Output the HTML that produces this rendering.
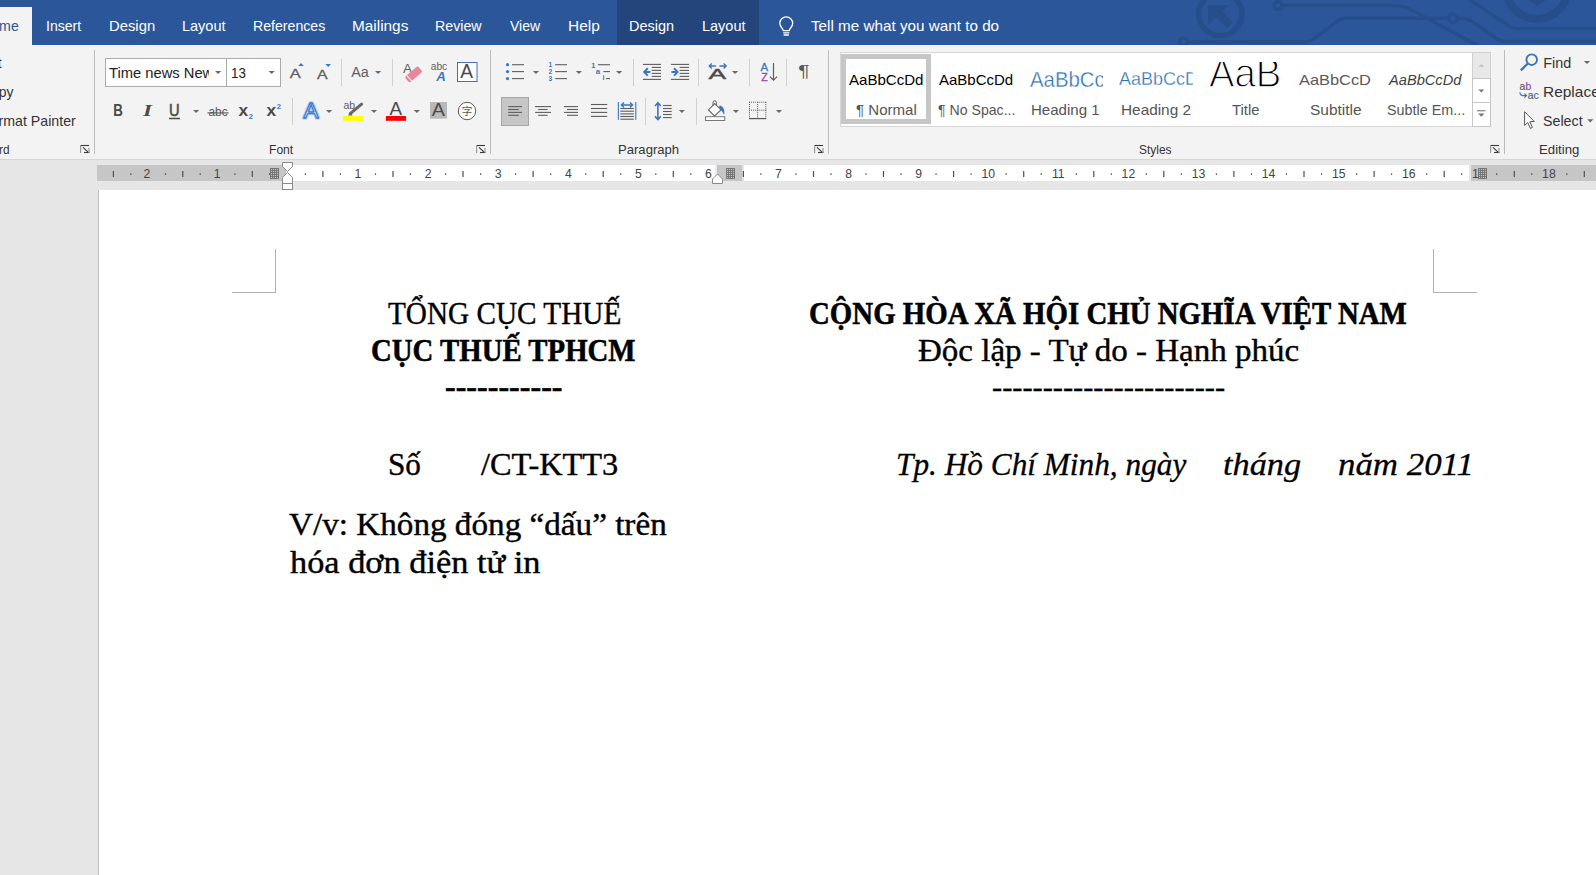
<!DOCTYPE html><html lang="vi"><head><meta charset="utf-8"><title>Document - Word</title><style>
html,body{margin:0;padding:0}
body{width:1596px;height:875px;overflow:hidden;position:relative;background:#e6e6e6;font-family:"Liberation Sans",sans-serif}
div,svg{position:absolute;box-sizing:border-box}
.t{margin:0;padding:0}
.vs{width:1px;background:#d0d0d0}
</style></head><body>
<div style="left:0;top:0;width:1596px;height:45px;background:#2b579a"></div>
<svg width="1596" height="45" viewBox="0 0 1596 45" style="left:0;top:0"><g fill="none" stroke="#264e8b" stroke-width="3.4"><circle cx="1220.4" cy="14" r="21.6" stroke-width="5.6"/><circle cx="1278" cy="5.6" r="4"/><path d="M1282.5 5.6 H1398 Q1404 5.6 1410 9 L1474 43.5 L1480 47"/><circle cx="1183.5" cy="42" r="4"/><path d="M1188 42 H1306 Q1310 42 1314 39 L1336 22 Q1341 18.2 1346 18.2 H1448"/><circle cx="1452.7" cy="18.2" r="4.2"/><path d="M1457 18.2 H1462 Q1468 18.2 1473 22 L1497 39 Q1501 41.5 1506 41.5 H1600"/><path d="M1466 -3 L1508 25.5 Q1512 28.5 1518 28.5 H1600"/><circle cx="1537" cy="-12" r="31" stroke-width="8"/></g><path d="M1522 -4 L1537 6 L1552 -4z" fill="#264e8b"/><path d="M1208 5 h21 l-7 6 l11 11 l-6 6 l-11 -11 l-8 8z" fill="#264e8b"/><path d="M783.2 30.6 C783.2 28.4 779.8 27.2 779.8 23.3 a6.45 6.45 0 0 1 12.9 0 C792.7 27.2 789.3 28.4 789.3 30.6 Z M783.2 32.8 H789.3 M783.6 35 H788.9" fill="none" stroke="#fff" stroke-width="1.3" stroke-linejoin="round"/></svg>
<div style="left:617px;top:0;width:142px;height:45px;background:#23457c"></div>
<div style="left:0;top:7px;width:32px;height:38px;background:#f3f3f3"></div>
<div style="left:0;top:45px;width:1596px;height:114px;background:#f3f3f3"></div>
<div style="left:0;top:159px;width:1596px;height:1px;background:#d6d6d6"></div>
<div class="vs" style="left:94px;top:50px;height:104px;background:#bdbdbd"></div>
<div class="vs" style="left:490px;top:50px;height:104px;background:#bdbdbd"></div>
<div class="vs" style="left:828px;top:50px;height:104px;background:#bdbdbd"></div>
<div class="vs" style="left:1504px;top:50px;height:104px;background:#bdbdbd"></div>
<div class="vs" style="left:341px;top:59px;height:27px"></div>
<div class="vs" style="left:392px;top:59px;height:27px"></div>
<div class="vs" style="left:633px;top:59px;height:27px"></div>
<div class="vs" style="left:698px;top:59px;height:27px"></div>
<div class="vs" style="left:749px;top:59px;height:27px"></div>
<div class="vs" style="left:786px;top:59px;height:27px"></div>
<div class="vs" style="left:292px;top:98px;height:27px"></div>
<div class="vs" style="left:645px;top:98px;height:27px"></div>
<div class="vs" style="left:696px;top:98px;height:27px"></div>
<div style="left:105px;top:58px;width:122px;height:29px;background:#fff;border:1px solid #ababab;overflow:hidden"></div>
<div style="left:226px;top:58px;width:55px;height:29px;background:#fff;border:1px solid #ababab"></div>
<div style="left:840px;top:52px;width:651px;height:75px;background:#fff;border:1px solid #d6d6d6"></div>
<div style="left:841px;top:54px;width:90px;height:70px;background:#fff;border:5px solid #c6c6c6"></div>
<div style="left:1472px;top:52px;width:19px;height:27px;background:#e8e8e8;border:1px solid #d0d0d0"></div>
<div style="left:1472px;top:78px;width:19px;height:25px;background:#fff;border:1px solid #c6c6c6"></div>
<div style="left:1472px;top:102px;width:19px;height:25px;background:#fff;border:1px solid #c6c6c6"></div>
<div style="left:501px;top:97px;width:28px;height:29px;background:#c6c6c6;border:1px solid #a6a6a6"></div>
<svg width="1596" height="115" viewBox="0 45 1596 115" style="left:0;top:45px" font-family="Liberation Sans, sans-serif"><path d="M215 71 h6.2 l-3.1 3.1 z" fill="#6a6a6a"/><path d="M268.6 71 h6.2 l-3.1 3.1 z" fill="#6a6a6a"/><path d="M375 71 h6.2 l-3.1 3.1 z" fill="#6a6a6a"/><path d="M193 110 h6.2 l-3.1 3.1 z" fill="#6a6a6a"/><path d="M326 110 h6.2 l-3.1 3.1 z" fill="#6a6a6a"/><path d="M370.9 110 h6.2 l-3.1 3.1 z" fill="#6a6a6a"/><path d="M413.8 110 h6.2 l-3.1 3.1 z" fill="#6a6a6a"/><path d="M532.9 71 h6.2 l-3.1 3.1 z" fill="#6a6a6a"/><path d="M575.8 71 h6.2 l-3.1 3.1 z" fill="#6a6a6a"/><path d="M616 71 h6.2 l-3.1 3.1 z" fill="#6a6a6a"/><path d="M732 71 h6.2 l-3.1 3.1 z" fill="#6a6a6a"/><path d="M678.8 110 h6.2 l-3.1 3.1 z" fill="#6a6a6a"/><path d="M732.8 110 h6.2 l-3.1 3.1 z" fill="#6a6a6a"/><path d="M775.9 110 h6.2 l-3.1 3.1 z" fill="#6a6a6a"/><path d="M1583.9 61 h6.2 l-3.1 3.1 z" fill="#6a6a6a"/><path d="M1587.2 119.3 h6.2 l-3.1 3.1 z" fill="#6a6a6a"/><path d="M80.5 145.5 H89" fill="none" stroke="#3a3a3a" stroke-width="1.1"/><path d="M80.6 146 V153" fill="none" stroke="#9a9a9a" stroke-width="1.2"/><path d="M83 147.3 L88.6 152.6" stroke="#3a3a3a" stroke-width="1.1" fill="none"/><path d="M84 152.5 H89.5" stroke="#3a3a3a" stroke-width="1.1" fill="none"/><path d="M89 148 V153" stroke="#9a9a9a" stroke-width="1.2" fill="none"/><path d="M476.5 145.5 H485" fill="none" stroke="#3a3a3a" stroke-width="1.1"/><path d="M476.6 146 V153" fill="none" stroke="#9a9a9a" stroke-width="1.2"/><path d="M479 147.3 L484.6 152.6" stroke="#3a3a3a" stroke-width="1.1" fill="none"/><path d="M480 152.5 H485.5" stroke="#3a3a3a" stroke-width="1.1" fill="none"/><path d="M485 148 V153" stroke="#9a9a9a" stroke-width="1.2" fill="none"/><path d="M814.5 145.5 H823" fill="none" stroke="#3a3a3a" stroke-width="1.1"/><path d="M814.6 146 V153" fill="none" stroke="#9a9a9a" stroke-width="1.2"/><path d="M817 147.3 L822.6 152.6" stroke="#3a3a3a" stroke-width="1.1" fill="none"/><path d="M818 152.5 H823.5" stroke="#3a3a3a" stroke-width="1.1" fill="none"/><path d="M823 148 V153" stroke="#9a9a9a" stroke-width="1.2" fill="none"/><path d="M1490.5 145.5 H1499" fill="none" stroke="#3a3a3a" stroke-width="1.1"/><path d="M1490.6 146 V153" fill="none" stroke="#9a9a9a" stroke-width="1.2"/><path d="M1493 147.3 L1498.6 152.6" stroke="#3a3a3a" stroke-width="1.1" fill="none"/><path d="M1494 152.5 H1499.5" stroke="#3a3a3a" stroke-width="1.1" fill="none"/><path d="M1499 148 V153" stroke="#9a9a9a" stroke-width="1.2" fill="none"/><text x="289.8" y="77.8" font-size="12.8" fill="#5e5e5e" stroke="#5e5e5e" stroke-width="0.3" textLength="11" lengthAdjust="spacingAndGlyphs">A</text><path d="M298.2 66 h5.6 l-2.8 -3.1z" fill="#3b76c2"/><text x="317" y="78.6" font-size="12.2" fill="#5e5e5e" stroke="#5e5e5e" stroke-width="0.3" textLength="10.6" lengthAdjust="spacingAndGlyphs">A</text><path d="M325.4 64 h5.6 l-2.8 2.9z" fill="#3b76c2"/><text x="351.2" y="76.6" font-size="14" fill="#5e5e5e" textLength="17.6" lengthAdjust="spacingAndGlyphs">Aa</text><text x="403" y="73" font-size="13.4" fill="#5e5e5e">A</text><g transform="translate(413.6 74.4) rotate(-41)"><rect x="-8.6" y="-3.8" width="17.2" height="7.6" rx="1.6" fill="#e5889b"/><rect x="-6.3" y="-3.8" width="1" height="7.6" fill="#f3f3f3"/></g><text x="430.8" y="70" font-size="10.6" fill="#5e5e5e" textLength="16.4" lengthAdjust="spacingAndGlyphs">abc</text><text x="436.2" y="80.7" font-size="13.2" font-weight="bold" font-style="italic" fill="#3b76c2">A</text><rect x="457.5" y="62.5" width="19.5" height="19" fill="#fff" stroke="#3f6fb5" stroke-width="1"/><text x="460.2" y="77.6" font-size="19.4" fill="#4a4a4a" textLength="12.8" lengthAdjust="spacingAndGlyphs">A</text><text x="113.2" y="116.4" font-size="15.6" font-weight="bold" fill="#4a4a4a" textLength="9.6" lengthAdjust="spacingAndGlyphs">B</text><text x="143" y="116.4" font-size="16.6" font-weight="bold" font-style="italic" fill="#4a4a4a" font-family="Liberation Serif, serif" textLength="9" lengthAdjust="spacingAndGlyphs">I</text><text x="169" y="116.4" font-size="15.6" fill="#4a4a4a" stroke="#4a4a4a" stroke-width="0.5" textLength="10.6" lengthAdjust="spacingAndGlyphs">U</text><rect x="169" y="117.75" width="11.00" height="1.5" fill="#4a4a4a"/><text x="208.4" y="116.4" font-size="13.6" fill="#5a5a5a" textLength="19.2" lengthAdjust="spacingAndGlyphs">abc</text><rect x="207.4" y="112.35" width="21.20" height="1.1" fill="#5a5a5a"/><text x="238.6" y="116.4" font-size="16" font-weight="bold" fill="#4a4a4a" textLength="9.6" lengthAdjust="spacingAndGlyphs">x</text><text x="248.7" y="118.8" font-size="7.6" font-weight="bold" fill="#3b76c2">2</text><text x="266.4" y="116.4" font-size="16" font-weight="bold" fill="#4a4a4a" textLength="9.6" lengthAdjust="spacingAndGlyphs">x</text><text x="276.8" y="109" font-size="7.6" font-weight="bold" fill="#3b76c2">2</text><text x="303.6" y="118.4" font-size="22.4" fill="#fff" stroke="#bcd4f0" stroke-width="3.4" stroke-linejoin="round" textLength="15" lengthAdjust="spacingAndGlyphs">A</text><text x="303.6" y="118.4" font-size="22.4" fill="#fff" stroke="#3b7bd0" stroke-width="1.3" stroke-linejoin="round" textLength="15" lengthAdjust="spacingAndGlyphs">A</text><text x="343.4" y="108.6" font-size="11" fill="#5e5e5e" textLength="11.6" lengthAdjust="spacingAndGlyphs">ab</text><path d="M361.6 104.2 L350.2 113.6" stroke="#666" stroke-width="3" stroke-linecap="round" fill="none"/><path d="M351.4 112 l-3.6 3.6 h4.6z" fill="#666"/><rect x="343" y="116" width="20" height="4.8" fill="#ffff00"/><text x="389.6" y="114.5" font-size="17.6" fill="#4a4a4a" textLength="12.6" lengthAdjust="spacingAndGlyphs">A</text><rect x="385.9" y="116" width="20.1" height="4.8" fill="#ff0000"/><rect x="430" y="102" width="17" height="16.7" fill="#b9b9b9"/><text x="431.8" y="116.4" font-size="18.4" fill="#4a4a4a" textLength="13.2" lengthAdjust="spacingAndGlyphs">A</text><circle cx="467" cy="111" r="8.7" fill="#fff" stroke="#5a5a5a" stroke-width="1"/><text x="467" y="115" font-size="10.6" fill="#5a5a5a" text-anchor="middle" font-family="Noto Sans CJK SC, Noto Sans CJK JP, sans-serif">字</text><circle cx="507.5" cy="64.7" r="1.6" fill="#3b76c2"/><rect x="512" y="64.15" width="12.00" height="1.1" fill="#5e5e5e"/><rect x="555.2" y="64.15" width="11.80" height="1.1" fill="#5e5e5e"/><circle cx="507.5" cy="71.6" r="1.6" fill="#3b76c2"/><rect x="512" y="71.05" width="12.00" height="1.1" fill="#5e5e5e"/><rect x="555.2" y="71.05" width="11.80" height="1.1" fill="#5e5e5e"/><circle cx="507.5" cy="78.6" r="1.6" fill="#3b76c2"/><rect x="512" y="78.05" width="12.00" height="1.1" fill="#5e5e5e"/><rect x="555.2" y="78.05" width="11.80" height="1.1" fill="#5e5e5e"/><text x="548.6" y="67.0" font-size="6.6" font-weight="bold" fill="#3b76c2">1</text><text x="548.6" y="73.89999999999999" font-size="6.6" font-weight="bold" fill="#3b76c2">2</text><text x="548.6" y="80.89999999999999" font-size="6.6" font-weight="bold" fill="#3b76c2">3</text><text x="591.2" y="67.6" font-size="7.4" font-weight="bold" fill="#3b76c2">1</text><rect x="598" y="64.15" width="12.00" height="1.1" fill="#5e5e5e"/><text x="595.8" y="74" font-size="7.8" font-weight="bold" fill="#3b76c2">a</text><rect x="603.4" y="71.05" width="6.60" height="1.1" fill="#5e5e5e"/><text x="602.4" y="80.4" font-size="7.2" font-weight="bold" fill="#3b76c2">i</text><rect x="606" y="78.05" width="4.00" height="1.1" fill="#5e5e5e"/><rect x="642.9" y="63.85" width="18.10" height="1.1" fill="#5e5e5e"/><rect x="642.9" y="78.85" width="18.10" height="1.1" fill="#5e5e5e"/><rect x="651.7" y="66.85" width="9.30" height="1.1" fill="#5e5e5e"/><rect x="651.7" y="69.85" width="9.30" height="1.1" fill="#5e5e5e"/><rect x="651.7" y="72.85" width="9.30" height="1.1" fill="#5e5e5e"/><rect x="651.7" y="75.85" width="9.30" height="1.1" fill="#5e5e5e"/><rect x="671" y="63.85" width="18.10" height="1.1" fill="#5e5e5e"/><rect x="671" y="78.85" width="18.10" height="1.1" fill="#5e5e5e"/><rect x="679.6" y="66.85" width="9.50" height="1.1" fill="#5e5e5e"/><rect x="679.6" y="69.85" width="9.50" height="1.1" fill="#5e5e5e"/><rect x="679.6" y="72.85" width="9.50" height="1.1" fill="#5e5e5e"/><rect x="679.6" y="75.85" width="9.50" height="1.1" fill="#5e5e5e"/><path d="M650.4 71.9 H644.6 M647.8 68.2 L644.2 71.9 L647.8 75.6" stroke="#3b76c2" stroke-width="2" fill="none"/><path d="M671.4 71.9 H677.2 M674 68.2 L677.6 71.9 L674 75.6" stroke="#3b76c2" stroke-width="2" fill="none"/><text x="708.6" y="78.8" font-size="14" fill="#4a4a4a" stroke="#4a4a4a" stroke-width="0.4" textLength="17.6" lengthAdjust="spacingAndGlyphs">A</text><path d="M716 66 H709.4 M711.8 63.6 L709.2 66 L711.8 68.4 M719.4 66 H726 M723.6 63.6 L726.2 66 L723.6 68.4" stroke="#3b76c2" stroke-width="1.3" fill="none"/><text x="760.6" y="71.3" font-size="11.4" fill="#3b76c2" stroke="#3b76c2" stroke-width="0.3">A</text><text x="761.2" y="80.7" font-size="10.6" fill="#8e4bb0" stroke="#8e4bb0" stroke-width="0.3">Z</text><path d="M773.5 63 V80 M770 76.6 L773.5 80.2 L777 76.6" stroke="#5e5e5e" stroke-width="1.2" fill="none"/><text x="798.2" y="77.4" font-size="15.6" fill="#5a5a5a" textLength="11.4" lengthAdjust="spacingAndGlyphs">¶</text><rect x="508.2" y="106.05" width="13.80" height="1.1" fill="#5e5e5e"/><rect x="535.1" y="106.05" width="15.90" height="1.1" fill="#5e5e5e"/><rect x="563.9" y="106.05" width="14.10" height="1.1" fill="#5e5e5e"/><rect x="508.2" y="108.95" width="10.60" height="1.1" fill="#5e5e5e"/><rect x="538.2" y="108.95" width="9.40" height="1.1" fill="#5e5e5e"/><rect x="567" y="108.95" width="11.00" height="1.1" fill="#5e5e5e"/><rect x="508.2" y="111.85" width="13.80" height="1.1" fill="#5e5e5e"/><rect x="535.1" y="111.85" width="15.90" height="1.1" fill="#5e5e5e"/><rect x="563.9" y="111.85" width="14.10" height="1.1" fill="#5e5e5e"/><rect x="508.2" y="114.75" width="10.60" height="1.1" fill="#5e5e5e"/><rect x="538.2" y="114.75" width="9.40" height="1.1" fill="#5e5e5e"/><rect x="567" y="114.75" width="11.00" height="1.1" fill="#5e5e5e"/><rect x="590.9" y="103.95" width="16.30" height="1.1" fill="#5e5e5e"/><rect x="590.9" y="107.95" width="16.30" height="1.1" fill="#5e5e5e"/><rect x="590.9" y="111.85" width="16.30" height="1.1" fill="#5e5e5e"/><rect x="590.9" y="115.85" width="16.30" height="1.1" fill="#5e5e5e"/><rect x="617.8" y="102" width="1.1" height="17.8" fill="#3b76c2"/><rect x="635.2" y="102" width="1.1" height="17.8" fill="#3b76c2"/><path d="M621.6 105 H632.4 M624 102.6 L621.4 105 L624 107.4 M630 102.6 L632.6 105 L630 107.4" stroke="#3b76c2" stroke-width="1.4" fill="none"/><rect x="620.3" y="107.95" width="13.60" height="1.1" fill="#5e5e5e"/><rect x="620.3" y="110.65" width="13.60" height="1.1" fill="#5e5e5e"/><rect x="620.3" y="113.35" width="13.60" height="1.1" fill="#5e5e5e"/><rect x="620.3" y="115.95" width="13.60" height="1.1" fill="#5e5e5e"/><rect x="620.3" y="118.65" width="13.60" height="1.1" fill="#5e5e5e"/><path d="M657.9 103 V119.4 M655 106 L657.9 102.8 L660.8 106 M655 116.4 L657.9 119.6 L660.8 116.4" stroke="#3b76c2" stroke-width="1.6" fill="none"/><rect x="663" y="104.95" width="8.70" height="1.1" fill="#5e5e5e"/><rect x="663" y="107.95" width="8.70" height="1.1" fill="#5e5e5e"/><rect x="663" y="110.95" width="8.70" height="1.1" fill="#5e5e5e"/><rect x="663" y="113.95" width="8.70" height="1.1" fill="#5e5e5e"/><rect x="663" y="117.05" width="8.70" height="1.1" fill="#5e5e5e"/><rect x="705.5" y="116.7" width="19.2" height="3.8" fill="#fff" stroke="#777" stroke-width="1"/><path d="M714.8 103.6 L721 109.9 L714.6 116 L708.4 109.9 Z" fill="#fff" stroke="#666" stroke-width="1.1"/><path d="M713 106 V102.4 a1.7 1.7 0 0 1 3.4 0 V105.4" fill="none" stroke="#666" stroke-width="1"/><path d="M719.4 105.6 C723.4 106 725 110 724.2 115 C722.6 112 721.4 110.4 719 108.6z" fill="#3b76c2"/><path d="M749.5 102 V118.4" stroke="#555" stroke-width="1" stroke-dasharray="1 1.05" fill="none"/><path d="M757.6 102 V118.4" stroke="#555" stroke-width="1" stroke-dasharray="1 1.05" fill="none"/><path d="M765.8 102 V118.4" stroke="#555" stroke-width="1" stroke-dasharray="1 1.05" fill="none"/><path d="M749 102.2 H766.3" stroke="#555" stroke-width="1" stroke-dasharray="1 1.05" fill="none"/><path d="M749 110.2 H766.3" stroke="#555" stroke-width="1" stroke-dasharray="1 1.05" fill="none"/><rect x="749" y="118.00" width="17.30" height="1.2" fill="#555"/><path d="M1478.3 67 h6 l-3 -3z" fill="#c4c4c4"/><path d="M1478.3 89.6 h6 l-3 3z" fill="#777"/><rect x="1477.1" y="110.2" width="8.4" height="1.1" fill="#777"/><path d="M1478.1 113.6 h6.4 l-3.2 3.2z" fill="#777"/><circle cx="1531.7" cy="59.7" r="5.3" fill="none" stroke="#3a72b5" stroke-width="1.9"/><path d="M1527.6 63.8 L1520.8 70.4" stroke="#3a72b5" stroke-width="2.2" fill="none"/><text x="1519.6" y="90.4" font-size="10.4" fill="#5e5e5e" stroke="#5e5e5e" stroke-width="0.2">a</text><text x="1525.6" y="90.4" font-size="10.4" fill="#8e4bb0" stroke="#8e4bb0" stroke-width="0.2">b</text><text x="1527.8" y="99.3" font-size="10.4" fill="#5e5e5e" stroke="#5e5e5e" stroke-width="0.2">a</text><text x="1533.4" y="99.3" font-size="10.4" fill="#3a72b5" stroke="#3a72b5" stroke-width="0.2">c</text><path d="M1519.8 92.4 q0.4 3.2 3.4 3.2 h3 M1524.4 93.6 l2.2 2 l-2.2 2" stroke="#3a72b5" stroke-width="1.1" fill="none"/><path d="M1524.6 111.8 V125.4 L1527.8 122.6 L1530.4 128.4 L1532.4 127.4 L1529.8 121.8 L1534.2 121.4 Z" fill="#fff" stroke="#555" stroke-width="1" stroke-linejoin="round"/></svg>
<div style="left:98px;top:190px;width:1498px;height:685px;background:#fff;border-left:1px solid #c2c2c2"></div>
<svg width="1596" height="40" viewBox="0 155 1596 40" style="left:0;top:155px" font-family="Liberation Sans, sans-serif" font-size="12.2" fill="#444"><rect x="97" y="165" width="189.3" height="16" fill="#c6c6c6"/><rect x="286.3" y="165" width="429" height="16" fill="#fff"/><rect x="717" y="165" width="25.2" height="16" fill="#c6c6c6"/><rect x="744" y="165" width="725" height="16" fill="#fff"/><rect x="1471" y="165" width="125" height="16" fill="#c6c6c6"/><rect x="112.8" y="171" width="1.2" height="6" fill="#505050"/><rect x="130.2" y="173.3" width="1.2" height="1.6" fill="#505050"/><rect x="164.9" y="173.3" width="1.2" height="1.6" fill="#505050"/><rect x="182.2" y="171" width="1.2" height="6" fill="#505050"/><rect x="199.6" y="173.3" width="1.2" height="1.6" fill="#505050"/><rect x="234.3" y="173.3" width="1.2" height="1.6" fill="#505050"/><rect x="251.7" y="171" width="1.2" height="6" fill="#505050"/><rect x="269.0" y="173.3" width="1.2" height="1.6" fill="#505050"/><rect x="304.8" y="173.3" width="1.2" height="1.6" fill="#505050"/><rect x="322.3" y="171" width="1.2" height="6" fill="#505050"/><rect x="339.8" y="173.3" width="1.2" height="1.6" fill="#505050"/><rect x="374.9" y="173.3" width="1.2" height="1.6" fill="#505050"/><rect x="392.4" y="171" width="1.2" height="6" fill="#505050"/><rect x="409.9" y="173.3" width="1.2" height="1.6" fill="#505050"/><rect x="444.9" y="173.3" width="1.2" height="1.6" fill="#505050"/><rect x="462.4" y="171" width="1.2" height="6" fill="#505050"/><rect x="480.0" y="173.3" width="1.2" height="1.6" fill="#505050"/><rect x="515.0" y="173.3" width="1.2" height="1.6" fill="#505050"/><rect x="532.5" y="171" width="1.2" height="6" fill="#505050"/><rect x="550.1" y="173.3" width="1.2" height="1.6" fill="#505050"/><rect x="585.1" y="173.3" width="1.2" height="1.6" fill="#505050"/><rect x="602.6" y="171" width="1.2" height="6" fill="#505050"/><rect x="620.1" y="173.3" width="1.2" height="1.6" fill="#505050"/><rect x="655.2" y="173.3" width="1.2" height="1.6" fill="#505050"/><rect x="672.7" y="171" width="1.2" height="6" fill="#505050"/><rect x="690.2" y="173.3" width="1.2" height="1.6" fill="#505050"/><rect x="742.8" y="171" width="1.2" height="6" fill="#505050"/><rect x="760.3" y="173.3" width="1.2" height="1.6" fill="#505050"/><rect x="795.3" y="173.3" width="1.2" height="1.6" fill="#505050"/><rect x="812.9" y="171" width="1.2" height="6" fill="#505050"/><rect x="830.4" y="173.3" width="1.2" height="1.6" fill="#505050"/><rect x="865.4" y="173.3" width="1.2" height="1.6" fill="#505050"/><rect x="882.9" y="171" width="1.2" height="6" fill="#505050"/><rect x="900.4" y="173.3" width="1.2" height="1.6" fill="#505050"/><rect x="935.5" y="173.3" width="1.2" height="1.6" fill="#505050"/><rect x="953.0" y="171" width="1.2" height="6" fill="#505050"/><rect x="970.5" y="173.3" width="1.2" height="1.6" fill="#505050"/><rect x="1005.6" y="173.3" width="1.2" height="1.6" fill="#505050"/><rect x="1023.1" y="171" width="1.2" height="6" fill="#505050"/><rect x="1040.6" y="173.3" width="1.2" height="1.6" fill="#505050"/><rect x="1075.7" y="173.3" width="1.2" height="1.6" fill="#505050"/><rect x="1093.2" y="171" width="1.2" height="6" fill="#505050"/><rect x="1110.7" y="173.3" width="1.2" height="1.6" fill="#505050"/><rect x="1145.7" y="173.3" width="1.2" height="1.6" fill="#505050"/><rect x="1163.2" y="171" width="1.2" height="6" fill="#505050"/><rect x="1180.8" y="173.3" width="1.2" height="1.6" fill="#505050"/><rect x="1215.8" y="173.3" width="1.2" height="1.6" fill="#505050"/><rect x="1233.3" y="171" width="1.2" height="6" fill="#505050"/><rect x="1250.9" y="173.3" width="1.2" height="1.6" fill="#505050"/><rect x="1285.9" y="173.3" width="1.2" height="1.6" fill="#505050"/><rect x="1303.4" y="171" width="1.2" height="6" fill="#505050"/><rect x="1320.9" y="173.3" width="1.2" height="1.6" fill="#505050"/><rect x="1356.0" y="173.3" width="1.2" height="1.6" fill="#505050"/><rect x="1373.5" y="171" width="1.2" height="6" fill="#505050"/><rect x="1391.0" y="173.3" width="1.2" height="1.6" fill="#505050"/><rect x="1426.1" y="173.3" width="1.2" height="1.6" fill="#505050"/><rect x="1443.6" y="171" width="1.2" height="6" fill="#505050"/><rect x="1461.1" y="173.3" width="1.2" height="1.6" fill="#505050"/><rect x="1496.1" y="173.3" width="1.2" height="1.6" fill="#505050"/><rect x="1513.7" y="171" width="1.2" height="6" fill="#505050"/><rect x="1531.2" y="173.3" width="1.2" height="1.6" fill="#505050"/><rect x="1566.2" y="173.3" width="1.2" height="1.6" fill="#505050"/><rect x="1583.7" y="171" width="1.2" height="6" fill="#505050"/><text x="147.0" y="177.9" text-anchor="middle">2</text><text x="217.2" y="177.9" text-anchor="middle">1</text><text x="358.0" y="177.9" text-anchor="middle">1</text><text x="428.1" y="177.9" text-anchor="middle">2</text><text x="498.2" y="177.9" text-anchor="middle">3</text><text x="568.3" y="177.9" text-anchor="middle">4</text><text x="638.4" y="177.9" text-anchor="middle">5</text><text x="708.4" y="177.9" text-anchor="middle">6</text><text x="778.5" y="177.9" text-anchor="middle">7</text><text x="848.6" y="177.9" text-anchor="middle">8</text><text x="918.7" y="177.9" text-anchor="middle">9</text><text x="988.2" y="177.9" text-anchor="middle">10</text><text x="1058.3" y="177.9" text-anchor="middle">11</text><text x="1128.4" y="177.9" text-anchor="middle">12</text><text x="1198.5" y="177.9" text-anchor="middle">13</text><text x="1268.6" y="177.9" text-anchor="middle">14</text><text x="1338.7" y="177.9" text-anchor="middle">15</text><text x="1408.7" y="177.9" text-anchor="middle">16</text><text x="1548.9" y="177.9" text-anchor="middle">18</text><text x="1472" y="177.9">1</text><rect x="270" y="168" width="1" height="11" fill="#757575"/><rect x="272" y="168" width="1" height="11" fill="#757575"/><rect x="274" y="168" width="1" height="11" fill="#757575"/><rect x="276" y="168" width="1" height="11" fill="#757575"/><rect x="278" y="168" width="1" height="11" fill="#757575"/><rect x="270" y="168" width="9" height="1" fill="#757575"/><rect x="270" y="170" width="9" height="1" fill="#757575"/><rect x="270" y="172" width="9" height="1" fill="#757575"/><rect x="270" y="174" width="9" height="1" fill="#757575"/><rect x="270" y="176" width="9" height="1" fill="#757575"/><rect x="270" y="178" width="9" height="1" fill="#757575"/><rect x="726" y="168" width="1" height="11" fill="#757575"/><rect x="728" y="168" width="1" height="11" fill="#757575"/><rect x="730" y="168" width="1" height="11" fill="#757575"/><rect x="732" y="168" width="1" height="11" fill="#757575"/><rect x="734" y="168" width="1" height="11" fill="#757575"/><rect x="726" y="168" width="9" height="1" fill="#757575"/><rect x="726" y="170" width="9" height="1" fill="#757575"/><rect x="726" y="172" width="9" height="1" fill="#757575"/><rect x="726" y="174" width="9" height="1" fill="#757575"/><rect x="726" y="176" width="9" height="1" fill="#757575"/><rect x="726" y="178" width="9" height="1" fill="#757575"/><rect x="1478" y="168" width="1" height="11" fill="#757575"/><rect x="1480" y="168" width="1" height="11" fill="#757575"/><rect x="1482" y="168" width="1" height="11" fill="#757575"/><rect x="1484" y="168" width="1" height="11" fill="#757575"/><rect x="1486" y="168" width="1" height="11" fill="#757575"/><rect x="1478" y="168" width="9" height="1" fill="#757575"/><rect x="1478" y="170" width="9" height="1" fill="#757575"/><rect x="1478" y="172" width="9" height="1" fill="#757575"/><rect x="1478" y="174" width="9" height="1" fill="#757575"/><rect x="1478" y="176" width="9" height="1" fill="#757575"/><rect x="1478" y="178" width="9" height="1" fill="#757575"/><path d="M282.5 162.5 H292.5 V166.5 L287.5 171.5 L282.5 166.5 Z" fill="#fff" stroke="#8a8a8a" stroke-width="1"/><path d="M287.5 172.5 L292.5 177.5 V183.5 H282.5 V177.5 Z" fill="#fff" stroke="#8a8a8a" stroke-width="1"/><rect x="282.5" y="183.5" width="10" height="6" fill="#fff" stroke="#8a8a8a" stroke-width="1"/><path d="M717.5 174 L722.5 179 V183.5 H712.5 V179 Z" fill="#fff" stroke="#8a8a8a" stroke-width="1"/></svg>
<div style="left:275px;top:249px;width:1px;height:44px;background:#b0b0b0"></div><div style="left:232px;top:292px;width:44px;height:1px;background:#b0b0b0"></div>
<div style="left:1433px;top:249px;width:1px;height:44px;background:#b0b0b0"></div><div style="left:1433px;top:292px;width:44px;height:1px;background:#b0b0b0"></div>
<div class="t" style="position:absolute;left:-18.86px;top:-4.00px;height:60px;line-height:60px;white-space:pre;color:#2b579a;font-family:'Liberation Sans', sans-serif;font-size:14.6px;transform-origin:0 0;transform:scaleX(0.9700);">Home</div>
<div class="t" style="position:absolute;left:45.64px;top:-4.00px;height:60px;line-height:60px;white-space:pre;color:#fff;font-family:'Liberation Sans', sans-serif;font-size:14.6px;transform-origin:0 0;transform:scaleX(0.9639);">Insert</div>
<div class="t" style="position:absolute;left:108.58px;top:-4.00px;height:60px;line-height:60px;white-space:pre;color:#fff;font-family:'Liberation Sans', sans-serif;font-size:14.6px;transform-origin:0 0;transform:scaleX(1.0159);">Design</div>
<div class="t" style="position:absolute;left:181.61px;top:-4.00px;height:60px;line-height:60px;white-space:pre;color:#fff;font-family:'Liberation Sans', sans-serif;font-size:14.6px;transform-origin:0 0;transform:scaleX(0.9930);">Layout</div>
<div class="t" style="position:absolute;left:252.63px;top:-4.00px;height:60px;line-height:60px;white-space:pre;color:#fff;font-family:'Liberation Sans', sans-serif;font-size:14.6px;transform-origin:0 0;transform:scaleX(0.9685);">References</div>
<div class="t" style="position:absolute;left:351.55px;top:-4.00px;height:60px;line-height:60px;white-space:pre;color:#fff;font-family:'Liberation Sans', sans-serif;font-size:14.6px;transform-origin:0 0;transform:scaleX(1.0519);">Mailings</div>
<div class="t" style="position:absolute;left:434.63px;top:-4.00px;height:60px;line-height:60px;white-space:pre;color:#fff;font-family:'Liberation Sans', sans-serif;font-size:14.6px;transform-origin:0 0;transform:scaleX(0.9723);">Review</div>
<div class="t" style="position:absolute;left:509.60px;top:-4.00px;height:60px;line-height:60px;white-space:pre;color:#fff;font-family:'Liberation Sans', sans-serif;font-size:14.6px;transform-origin:0 0;transform:scaleX(0.9594);">View</div>
<div class="t" style="position:absolute;left:567.54px;top:-4.00px;height:60px;line-height:60px;white-space:pre;color:#fff;font-family:'Liberation Sans', sans-serif;font-size:14.6px;transform-origin:0 0;transform:scaleX(1.0586);">Help</div>
<div class="t" style="position:absolute;left:628.61px;top:-4.00px;height:60px;line-height:60px;white-space:pre;color:#fff;font-family:'Liberation Sans', sans-serif;font-size:14.6px;transform-origin:0 0;transform:scaleX(0.9932);">Design</div>
<div class="t" style="position:absolute;left:701.61px;top:-4.00px;height:60px;line-height:60px;white-space:pre;color:#fff;font-family:'Liberation Sans', sans-serif;font-size:14.6px;transform-origin:0 0;transform:scaleX(0.9930);">Layout</div>
<div class="t" style="position:absolute;left:811.00px;top:-4.00px;height:60px;line-height:60px;white-space:pre;color:#fff;font-family:'Liberation Sans', sans-serif;font-size:14.6px;transform-origin:0 0;transform:scaleX(1.0444);">Tell me what you want to do</div>
<div class="t" style="position:absolute;left:-20.51px;top:33.00px;height:60px;line-height:60px;white-space:pre;color:#333;font-family:'Liberation Sans', sans-serif;font-size:14.4px;transform-origin:0 0;transform:scaleX(0.9700);">Cut</div>
<div class="t" style="position:absolute;left:-18.98px;top:62.00px;height:60px;line-height:60px;white-space:pre;color:#333;font-family:'Liberation Sans', sans-serif;font-size:14.4px;transform-origin:0 0;transform:scaleX(0.9700);">Copy</div>
<div class="t" style="position:absolute;left:-17.78px;top:91.00px;height:60px;line-height:60px;white-space:pre;color:#333;font-family:'Liberation Sans', sans-serif;font-size:14.4px;transform-origin:0 0;transform:scaleX(0.9850);">Format Painter</div>
<div class="t" style="position:absolute;left:-41.14px;top:120.00px;height:60px;line-height:60px;white-space:pre;color:#333;font-family:'Liberation Sans', sans-serif;font-size:12.2px;transform-origin:0 0;transform:scaleX(0.9700);">Clipboard</div>
<div class="t" style="position:absolute;left:269.01px;top:120.00px;height:60px;line-height:60px;white-space:pre;color:#333;font-family:'Liberation Sans', sans-serif;font-size:12.2px;transform-origin:0 0;transform:scaleX(0.9917);">Font</div>
<div class="t" style="position:absolute;left:617.53px;top:120.00px;height:60px;line-height:60px;white-space:pre;color:#333;font-family:'Liberation Sans', sans-serif;font-size:12.2px;transform-origin:0 0;transform:scaleX(1.0732);">Paragraph</div>
<div class="t" style="position:absolute;left:1138.62px;top:120.00px;height:60px;line-height:60px;white-space:pre;color:#333;font-family:'Liberation Sans', sans-serif;font-size:12.2px;transform-origin:0 0;transform:scaleX(0.9813);">Styles</div>
<div class="t" style="position:absolute;left:1538.52px;top:120.00px;height:60px;line-height:60px;white-space:pre;color:#333;font-family:'Liberation Sans', sans-serif;font-size:12.2px;transform-origin:0 0;transform:scaleX(1.0833);">Editing</div>
<div class="t" style="position:absolute;left:230.71px;top:43.00px;height:60px;line-height:60px;white-space:pre;color:#222;font-family:'Liberation Sans', sans-serif;font-size:15.0px;transform-origin:0 0;transform:scaleX(0.8933);">13</div>
<div class="t" style="position:absolute;left:1543.20px;top:33.00px;height:60px;line-height:60px;white-space:pre;color:#333;font-family:'Liberation Sans', sans-serif;font-size:14.4px;transform-origin:0 0;transform:scaleX(1.0000);">Find</div>
<div class="t" style="position:absolute;left:1543.13px;top:62.00px;height:60px;line-height:60px;white-space:pre;color:#333;font-family:'Liberation Sans', sans-serif;font-size:14.4px;transform-origin:0 0;transform:scaleX(1.0745);">Replace</div>
<div class="t" style="position:absolute;left:1543.21px;top:91.00px;height:60px;line-height:60px;white-space:pre;color:#333;font-family:'Liberation Sans', sans-serif;font-size:14.4px;transform-origin:0 0;transform:scaleX(0.9897);">Select</div>
<div class="t" style="position:absolute;left:849.10px;top:50.00px;height:60px;line-height:60px;white-space:pre;color:#000;font-family:'Liberation Sans', sans-serif;font-size:14.8px;transform-origin:0 0;transform:scaleX(1.0178);">AaBbCcDd</div>
<div class="t" style="position:absolute;left:855.60px;top:80.00px;height:60px;line-height:60px;white-space:pre;color:#555;font-family:'Liberation Sans', sans-serif;font-size:14.6px;transform-origin:0 0;transform:scaleX(1.0310);">¶ Normal</div>
<div class="t" style="position:absolute;left:939.00px;top:50.00px;height:60px;line-height:60px;white-space:pre;color:#000;font-family:'Liberation Sans', sans-serif;font-size:14.8px;transform-origin:0 0;transform:scaleX(1.0137);">AaBbCcDd</div>
<div class="t" style="position:absolute;left:938.00px;top:80.00px;height:60px;line-height:60px;white-space:pre;color:#555;font-family:'Liberation Sans', sans-serif;font-size:14.6px;transform-origin:0 0;transform:scaleX(0.9671);">¶ No Spac...</div>
<div class="t" style="position:absolute;left:1030.97px;top:80.00px;height:60px;line-height:60px;white-space:pre;color:#555;font-family:'Liberation Sans', sans-serif;font-size:14.6px;transform-origin:0 0;transform:scaleX(1.0308);">Heading 1</div>
<div class="t" style="position:absolute;left:1120.55px;top:80.00px;height:60px;line-height:60px;white-space:pre;color:#555;font-family:'Liberation Sans', sans-serif;font-size:14.6px;transform-origin:0 0;transform:scaleX(1.0523);">Heading 2</div>
<div class="t" style="position:absolute;left:1232.20px;top:80.00px;height:60px;line-height:60px;white-space:pre;color:#555;font-family:'Liberation Sans', sans-serif;font-size:14.6px;transform-origin:0 0;transform:scaleX(1.0185);">Title</div>
<div class="t" style="position:absolute;left:1309.84px;top:80.00px;height:60px;line-height:60px;white-space:pre;color:#555;font-family:'Liberation Sans', sans-serif;font-size:14.6px;transform-origin:0 0;transform:scaleX(1.0617);">Subtitle</div>
<div class="t" style="position:absolute;left:1386.92px;top:80.00px;height:60px;line-height:60px;white-space:pre;color:#555;font-family:'Liberation Sans', sans-serif;font-size:14.6px;transform-origin:0 0;transform:scaleX(0.9833);">Subtle Em...</div>
<div class="t" style="position:absolute;left:1299.40px;top:50.00px;height:60px;line-height:60px;white-space:pre;color:#5a5a5a;font-family:'Liberation Sans', sans-serif;font-size:15px;transform-origin:0 0;transform:scaleX(1.0923);">AaBbCcD</div>
<div class="t" style="position:absolute;left:1389.19px;top:50.00px;height:60px;line-height:60px;white-space:pre;color:#404040;font-family:'Liberation Sans', sans-serif;font-size:14.8px;font-style:italic;transform-origin:0 0;transform:scaleX(0.9880);">AaBbCcDd</div>
<div style="left:106px;top:59px;width:103.30px;height:27.00px;overflow:hidden"><div class="t" style="position:absolute;left:2.80px;top:-16.00px;height:60px;line-height:60px;white-space:pre;color:#222;font-family:'Liberation Sans', sans-serif;font-size:15.0px;transform-origin:0 0;transform:scaleX(0.9821);">Time news New Roman</div></div>
<div style="left:1026px;top:53px;width:77.00px;height:47.00px;overflow:hidden"><div class="t" style="position:absolute;left:3.50px;top:-3.00px;height:60px;line-height:60px;white-space:pre;color:#2e74b5;font-family:'Liberation Sans', sans-serif;font-size:22.4px;-webkit-text-stroke:0.35px #fff;transform-origin:0 0;transform:scaleX(0.9100);">AaBbCcDd</div></div>
<div style="left:1116px;top:53px;width:77.00px;height:47.00px;overflow:hidden"><div class="t" style="position:absolute;left:3.40px;top:-4.00px;height:60px;line-height:60px;white-space:pre;color:#2e74b5;font-family:'Liberation Sans', sans-serif;font-size:18.2px;-webkit-text-stroke:0.3px #fff;transform-origin:0 0;transform:scaleX(0.9879);">AaBbCcDd</div></div>
<div style="left:1200px;top:62px;width:90.00px;height:38.00px;overflow:hidden"><div class="t" style="position:absolute;left:8.65px;top:-19.00px;height:60px;line-height:60px;white-space:pre;color:#000;font-family:'Liberation Sans', sans-serif;font-size:40.5px;-webkit-text-stroke:1.3px #fff;transform-origin:0 0;transform:scaleX(0.9452);">AaB</div></div>
<div class="t" style="position:absolute;left:387.80px;top:284.00px;height:60px;line-height:60px;white-space:pre;color:#000;font-family:'Liberation Serif', serif;font-size:31.6px;-webkit-text-stroke:0.4px #000;transform-origin:0 0;transform:scaleX(0.9251);">TỔNG CỤC THUẾ</div>
<div class="t" style="position:absolute;left:371.29px;top:321.00px;height:60px;line-height:60px;white-space:pre;color:#000;font-family:'Liberation Serif', serif;font-size:31.6px;font-weight:bold;-webkit-text-stroke:0.55px #000;transform-origin:0 0;transform:scaleX(0.9114);">CỤC THUẾ TPHCM</div>
<div class="t" style="position:absolute;left:444.98px;top:357.00px;height:60px;line-height:60px;white-space:pre;color:#000;font-family:'Liberation Serif', serif;font-size:31.6px;font-weight:bold;-webkit-text-stroke:0.55px #000;transform-origin:0 0;transform:scaleX(1.0158);">-----------</div>
<div class="t" style="position:absolute;left:388.13px;top:435.00px;height:60px;line-height:60px;white-space:pre;color:#000;font-family:'Liberation Serif', serif;font-size:31.6px;-webkit-text-stroke:0.4px #000;transform-origin:0 0;transform:scaleX(0.9871);">Số</div>
<div class="t" style="position:absolute;left:480.60px;top:435.00px;height:60px;line-height:60px;white-space:pre;color:#000;font-family:'Liberation Serif', serif;font-size:31.6px;-webkit-text-stroke:0.4px #000;transform-origin:0 0;transform:scaleX(1.0248);">/CT-KTT3</div>
<div class="t" style="position:absolute;left:289.20px;top:495.00px;height:60px;line-height:60px;white-space:pre;color:#000;font-family:'Liberation Serif', serif;font-size:31.6px;-webkit-text-stroke:0.4px #000;transform-origin:0 0;transform:scaleX(1.0500);">V/v: Không đóng “dấu” trên</div>
<div class="t" style="position:absolute;left:289.50px;top:533.00px;height:60px;line-height:60px;white-space:pre;color:#000;font-family:'Liberation Serif', serif;font-size:31.6px;-webkit-text-stroke:0.4px #000;transform-origin:0 0;transform:scaleX(1.0874);">hóa đơn điện tử in</div>
<div class="t" style="position:absolute;left:809.39px;top:284.00px;height:60px;line-height:60px;white-space:pre;color:#000;font-family:'Liberation Serif', serif;font-size:31.6px;font-weight:bold;-webkit-text-stroke:0.55px #000;transform-origin:0 0;transform:scaleX(0.9135);">CỘNG HÒA XÃ HỘI CHỦ NGHĨA VIỆT NAM</div>
<div class="t" style="position:absolute;left:918.40px;top:321.00px;height:60px;line-height:60px;white-space:pre;color:#000;font-family:'Liberation Serif', serif;font-size:31.6px;-webkit-text-stroke:0.4px #000;transform-origin:0 0;transform:scaleX(1.0445);">Độc lập - Tự do - Hạnh phúc</div>
<div class="t" style="position:absolute;left:992.44px;top:357.00px;height:60px;line-height:60px;white-space:pre;color:#000;font-family:'Liberation Serif', serif;font-size:31.6px;-webkit-text-stroke:0.4px #000;transform-origin:0 0;transform:scaleX(0.9633);">-----------------------</div>
<div class="t" style="position:absolute;left:896.22px;top:435.00px;height:60px;line-height:60px;white-space:pre;color:#000;font-family:'Liberation Serif', serif;font-size:31.6px;font-style:italic;-webkit-text-stroke:0.3px #000;transform-origin:0 0;transform:scaleX(0.9904);">Tp. Hồ Chí Minh, ngày</div>
<div class="t" style="position:absolute;left:1223.31px;top:435.00px;height:60px;line-height:60px;white-space:pre;color:#000;font-family:'Liberation Serif', serif;font-size:31.6px;font-style:italic;-webkit-text-stroke:0.3px #000;transform-origin:0 0;transform:scaleX(1.0857);">tháng</div>
<div class="t" style="position:absolute;left:1337.80px;top:435.00px;height:60px;line-height:60px;white-space:pre;color:#000;font-family:'Liberation Serif', serif;font-size:31.6px;font-style:italic;-webkit-text-stroke:0.3px #000;transform-origin:0 0;transform:scaleX(1.1034);">năm 2011</div>
</body></html>
